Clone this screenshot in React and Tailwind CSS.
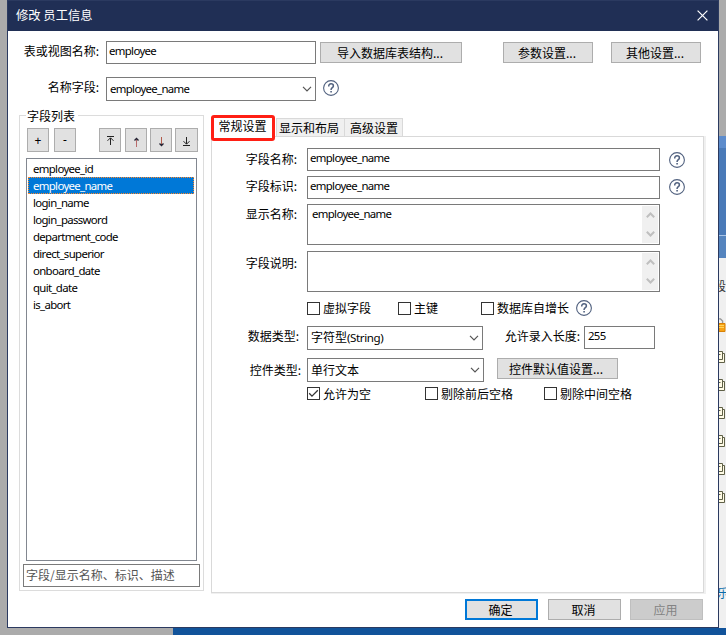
const FONT = "font-['Noto_Sans','Noto_Sans_CJK_SC',sans-serif]"
const CJK = "font-['Noto_Sans_CJK_SC',sans-serif]"
const LATIN = "font-['Noto_Sans',sans-serif] text-[11.4px] tracking-[-0.66px]"

const fields = [
    'employee_id',
    'employee_name',
    'login_name',
    'login_password',
    'department_code',
    'direct_superior',
    'onboard_date',
    'quit_date',
    'is_abort',
]

function HelpIcon({ className = '' }) {
    return (
        <svg className={`h-4 w-4 shrink-0 ${className}`} viewBox="0 0 16 16" fill="none" stroke="#51617f">
            <circle cx="8" cy="8" r="7.4" strokeWidth="1.1" />
            <path d="M5.7 6.4C5.7 4.7 6.6 3.8 8 3.8s2.4.8 2.4 2.1c0 1.6-2.3 1.8-2.3 3.6v.4" strokeWidth="1.5" />
            <path d="M7.3 11.7h1.6" strokeWidth="1.5" />
        </svg>
    )
}

function Chevron({ className = '' }) {
    return (
        <svg className={`h-[6px] w-[10px] shrink-0 ${className}`} viewBox="0 0 10 6" fill="none" stroke="currentColor">
            <path d="M1 .8l4 4 4-4" strokeWidth="1.2" />
        </svg>
    )
}

function Button({ children, tone = 'border border-[#adadad] bg-[#e1e1e1]', className = '' }) {
    return (
        <button className={`flex h-[21px] shrink-0 items-center justify-center leading-none ${CJK} ${tone} ${className}`}>
            {children}
        </button>
    )
}

function IconButton({ children, className = 'w-[22px]' }) {
    return (
        <button className={`flex h-6 shrink-0 items-center justify-center border border-[#adadad] bg-[#e1e1e1] leading-none ${className}`}>
            {children}
        </button>
    )
}

function TextBox({ children, className = '' }) {
    return (
        <div className={`flex h-[23px] shrink-0 border border-[#7a7a7a] bg-white pl-[2px] leading-[18px] ${className}`}>
            {children}
        </div>
    )
}

function Select({ children, className = '' }) {
    return (
        <div className={`flex h-6 shrink-0 items-center justify-between border border-[#7a7a7a] bg-white pr-[3px] pl-[3px] leading-none ${className}`}>
            <span>{children}</span>
            <Chevron className="text-[#555]" />
        </div>
    )
}

function TextArea({ children, className = '' }) {
    return (
        <div className={`flex h-[41px] w-[353px] shrink-0 justify-between border border-[#7a7a7a] bg-white p-px pl-1 leading-4 ${className}`}>
            <span className={LATIN}>{children}</span>
            <div className="flex w-4 flex-col items-center justify-between bg-[#f0f0f0] py-[6px] text-[#bfbfbf]">
                <svg className="h-[6px] w-[9px]" viewBox="0 0 9 6" fill="none" stroke="currentColor">
                    <path d="M.8 5.2l3.7-3.7 3.7 3.7" strokeWidth="2" />
                </svg>
                <svg className="h-[6px] w-[9px]" viewBox="0 0 9 6" fill="none" stroke="currentColor">
                    <path d="M.8.8l3.7 3.7L8.2.8" strokeWidth="2" />
                </svg>
            </div>
        </div>
    )
}

function Label({ children, className = '' }) {
    return <div className={`shrink-0 text-right leading-none ${CJK} ${className}`}>{children}</div>
}

function Checkbox({ children, checked, className = '' }) {
    return (
        <div className={`flex h-[13px] shrink-0 items-center gap-[3px] ${CJK} ${className}`}>
            <div className="flex h-[13px] w-[13px] items-center justify-center border border-[#333] bg-white">
                {checked && (
                    <svg className="h-[11px] w-[11px]" viewBox="0 0 11 11" fill="none" stroke="#333">
                        <path d="M1.2 5.3l2.8 2.8 5.8-5.8" strokeWidth="1.3" />
                    </svg>
                )}
            </div>
            <span className="leading-none whitespace-nowrap">{children}</span>
        </div>
    )
}

function CopyIcon() {
    return (
        <svg className="mb-4 h-3 w-[7px]" viewBox="0 0 7 12" fill="#fffbe6" stroke="#5f6047">
            <path d="M0 2.5h5.5v9H0" />
            <path d="M0 .5h3.5v8H0" />
            <path d="M0 3.5h1.5" />
        </svg>
    )
}

function FieldList() {
    return (
        <fieldset className="mt-[7px] ml-[11px] h-[476px] w-[185px] shrink-0 border border-[#dcdcdc]">
            {/* caption breaks the frame's top line */}
            <div className={`-mt-2 ml-[6px] h-4 w-[52px] bg-white pl-px leading-4 ${CJK}`}>字段列表</div>

            <div className="mt-1 flex pl-[7px]">
                <IconButton><span className="pt-[2px]">+</span></IconButton>
                <IconButton className="ml-[5px] w-[22px]">-</IconButton>
                <IconButton className="ml-[23px] w-[22px]">
                    <svg className="h-[9px] w-[9px]" viewBox="0 0 9 9" fill="none" stroke="#222">
                        <path d="M1 .5h7M4.5 9V2M1.5 4.8l3-3 3 3" />
                    </svg>
                </IconButton>
                <IconButton className="ml-1 w-[22px]">
                    <svg className="mt-[3px] h-[10px] w-[7px]" viewBox="0 0 7 10" fill="none">
                        <path d="M3.5 10V1" stroke="#b86a6a" />
                        <path d="M1.5 3.5l2-2 2 2" stroke="#223" strokeWidth="1.3" />
                    </svg>
                </IconButton>
                <IconButton className="ml-[3px] w-[22px]">
                    <svg className="mt-[3px] h-[10px] w-[7px]" viewBox="0 0 7 10" fill="none">
                        <path d="M3.5 0v9" stroke="#b05a4a" />
                        <path d="M1.5 6.5l2 2 2-2" stroke="#223" strokeWidth="1.3" />
                    </svg>
                </IconButton>
                <IconButton className="ml-[3px] w-[23px]">
                    <svg className="mt-[3px] h-[9px] w-[9px]" viewBox="0 0 9 9" fill="none" stroke="#222">
                        <path d="M1 8.5h7M4.5 0v7M1.5 4.2l3 3 3-3" />
                    </svg>
                </IconButton>
            </div>

            <ul className={`mt-[6px] ml-[6px] h-[403px] w-[171px] border border-[#828790] py-px pr-[2px] pl-px ${LATIN}`}>
                {fields.map((field) => (
                    <li
                        key={field}
                        className={
                            field === 'employee_name'
                                ? 'h-[17px] border border-dotted border-[#ff8728] bg-[#0078d7] pl-1 leading-[16px] text-white'
                                : 'h-[17px] pl-[5px] leading-[18px]'
                        }
                    >
                        {field}
                    </li>
                ))}
            </ul>

            <TextBox className={`mt-[3px] ml-[3px] w-[177px] text-[#555] ${CJK}`}>
                <span className="pt-px">字段/显示名称、标识、描述</span>
            </TextBox>
        </fieldset>
    )
}

function SettingsTabs() {
    return (
        <div className={`mt-[7px] ml-[7px] w-[495px] shrink-0 ${CJK}`}>
            <div className="flex h-[21px] items-end">
                <div className="relative w-[65px] self-stretch">
                    <div className="absolute top-0 left-0 flex h-[26px] w-[64px] justify-center rounded-[3px] border-3 border-[#ff1f14] bg-white pt-[2px] pr-px leading-none">
                        常规设置
                    </div>
                </div>
                <div className="flex h-[18px] w-[69px] items-center border border-b-0 border-[#d9d9d9] bg-[#f0f0f0] pt-px pl-[2px] leading-none whitespace-nowrap">
                    显示和布局
                </div>
                <div className="flex h-[18px] w-[58px] items-center border border-b-0 border-l-0 border-[#d9d9d9] bg-[#f0f0f0] pt-px pl-[5px] leading-none whitespace-nowrap">
                    高级设置
                </div>
            </div>

            <div className="h-[458px] border-r-2 border-b-2 border-[#f0f0f0]">
                <div className={`h-[457px] w-[493px] border border-[#d9d9d9] pt-[11px] ${FONT}`}>
                    <div className="flex">
                        <Label className="mt-[5px] mr-[10px] w-[85px]">字段名称:</Label>
                        <TextBox className="w-[353px]"><span className={LATIN}>employee_name</span></TextBox>
                        <HelpIcon className="mt-1 ml-[9px]" />
                    </div>
                    <div className="mt-[5px] flex">
                        <Label className="mt-1 mr-[10px] w-[85px]">字段标识:</Label>
                        <TextBox className="w-[353px]"><span className={LATIN}>employee_name</span></TextBox>
                        <HelpIcon className="mt-[3px] ml-[9px]" />
                    </div>
                    <div className="mt-[5px] flex">
                        <Label className="mt-1 mr-[10px] w-[85px]">显示名称:</Label>
                        <TextArea>employee_name</TextArea>
                    </div>
                    <div className="mt-[6px] flex">
                        <Label className="mt-[6px] mr-[10px] w-[85px]">字段说明:</Label>
                        <TextArea />
                    </div>

                    <div className="mt-2 flex h-4 items-center pl-[95px]">
                        <Checkbox className="w-[91px]">虚拟字段</Checkbox>
                        <Checkbox className="w-[83px]">主键</Checkbox>
                        <Checkbox className="w-[95px]">数据库自增长</Checkbox>
                        <HelpIcon />
                    </div>

                    <div className="mt-[10px] flex h-6">
                        <Label className="mt-1 mr-[8px] w-[87px]">数据类型:</Label>
                        <Select className="w-[176px]">字符型<span className="text-[11.6px] tracking-[-0.4px]">(String)</span></Select>
                        <Label className="mt-1 mr-1 w-[97px]">允许录入长度:</Label>
                        <TextBox className="w-[71px]"><span className={`pl-px ${LATIN}`}>255</span></TextBox>
                    </div>
                    <div className="mt-2 flex h-6">
                        <Label className="mt-[6px] mr-[6px] w-[89px]">控件类型:</Label>
                        <Select className="w-[177px]"><span className="block pt-[2px]">单行文本</span></Select>
                        <Button className="ml-[13px] w-[121px] pr-[3px]">控件默认值设置...</Button>
                    </div>

                    <div className="mt-[5px] flex pl-[95px]">
                        <Checkbox checked className="w-[118px]">允许为空</Checkbox>
                        <Checkbox className="w-[119px]">剔除前后空格</Checkbox>
                        <Checkbox>剔除中间空格</Checkbox>
                    </div>
                </div>
            </div>
        </div>
    )
}

export default function App() {
    return (
        <div className={`flex h-[635px] w-[726px] flex-col overflow-hidden bg-[#ababab] text-[12px] text-black ${FONT}`}>
            <div className="flex h-[628px]">
                <div className="w-[7px] shrink-0" />

                {/* Dialog */}
                <div className="flex w-[712px] shrink-0 flex-col border border-[#2b3a60] bg-white">
                    <div className={`flex h-[30px] shrink-0 items-center justify-between bg-[#202f55] pr-[10px] pl-2 text-white ${CJK}`}>
                        <span className="-mt-px text-[12.3px]">修改 员工信息</span>
                        <svg className="-mt-px h-[11px] w-[11px]" viewBox="0 0 11 11" stroke="currentColor" strokeWidth="1.2">
                            <path d="M.6.6l9.8 9.8M10.4.6L.6 10.4" />
                        </svg>
                    </div>

                    <div className="mt-[10px] flex h-[23px] shrink-0">
                        <Label className="mt-1 mr-[7px] w-[91px]">表或视图名称:</Label>
                        <TextBox className="w-[210px]"><span className={LATIN}>employee</span></TextBox>
                        <Button className="mt-px ml-1 w-[142px] pr-[2px]">导入数据库表结构...</Button>
                        <Button className="mt-px ml-[41px] w-[90px] pr-[2px]">参数设置...</Button>
                        <Button className="mt-px ml-[18px] w-[90px] pr-[2px]">其他设置...</Button>
                    </div>
                    <div className="mt-[13px] flex h-6 shrink-0">
                        <Label className="mt-1 mr-[7px] w-[91px]">名称字段:</Label>
                        <Select className="w-[210px]"><span className={LATIN}>employee_name</span></Select>
                        <HelpIcon className="mt-[3px] ml-[7px]" />
                    </div>

                    <div className="mt-[7px] flex shrink-0">
                        <FieldList />
                        <SettingsTabs />
                    </div>

                    <div className="mt-[5px] flex justify-end pr-[15px]">
                        <Button className="w-[73px] pr-[2px]" tone="border-2 border-[#0078d7] bg-[#e1e1e1]">确定</Button>
                        <Button className="ml-[10px] w-[73px] pr-[2px]">取消</Button>
                        <Button className="ml-[9px] w-[73px] pr-[2px]" tone="border border-[#bfbfbf] bg-[#ccc] text-[#838383]">应用</Button>
                    </div>
                </div>

                {/* Strip of the main window behind the dialog */}
                <div className="flex w-[7px] shrink-0 flex-col overflow-hidden pt-[136px]">
                    <div className="h-3 shrink-0 bg-[#5d8ccc]" />
                    <div className="h-[88px] shrink-0 border-b border-[#a9c4e6] bg-[#4a7ab8]" />
                    <div className="h-[22px] shrink-0 bg-[#5584be]" />
                    <div className="flex grow flex-col items-start bg-[#f0f0f0]">
                        <div className={`mt-[21px] flex h-[14px] w-[7px] shrink-0 justify-end leading-[14px] text-[#333] ${CJK}`}>段</div>
                        <svg className="mt-[25px] mb-[19px] h-[14px] w-[7px] shrink-0" viewBox="0 0 7 14" fill="none">
                            <path d="M0 .9h1.5L3.6 3v4" stroke="#999" strokeWidth="1.4" />
                            <path d="M0 5.5h6v8H0z" fill="#f7a316" stroke="#d98206" />
                            <path d="M0 7.5h5M0 9.5h5" stroke="#ffd45c" />
                        </svg>
                        <CopyIcon />
                        <CopyIcon />
                        <CopyIcon />
                        <CopyIcon />
                        <CopyIcon />
                        <CopyIcon />
                        <div className={`mt-[67px] -ml-[2px] flex h-[14px] w-[7px] shrink-0 leading-[14px] text-[#0a6cab] ${CJK}`}>乐</div>
                    </div>
                </div>
            </div>

            <div className="flex h-[7px] pl-[173px]">
                <div className="grow bg-[#11539a]" />
            </div>
        </div>
    )
}
